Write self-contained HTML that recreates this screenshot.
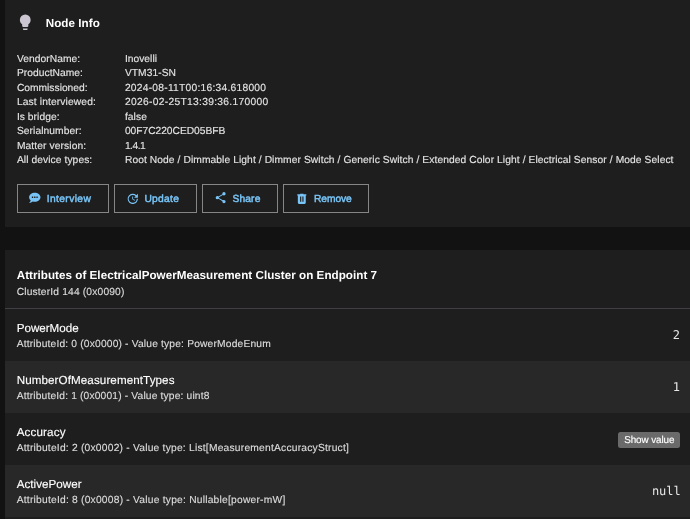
<!DOCTYPE html>
<html lang="en"><head><meta charset="utf-8"><title>Node Info</title>
<style>
html,body{margin:0;padding:0;background:#121212;}
body{width:690px;height:519px;overflow:hidden;position:relative;text-rendering:geometricPrecision;font-family:"Liberation Sans",sans-serif;}
h2,h3,p,dl,dt,dd,ul,li,button,code{margin:0;padding:0;border:0;background:none;font:inherit;color:inherit;list-style:none;text-align:left;text-rendering:inherit;}
.card{position:absolute;left:5px;width:685px;background:#1e1e1e;}
.s,.m{position:absolute;white-space:pre;}
.layer{position:absolute;left:0;top:0;width:100%;height:100%;will-change:transform;}
.s{font-family:"Liberation Sans",sans-serif;}
.m{font-family:"DejaVu Sans Mono","Liberation Mono",monospace;}
.btn{position:absolute;box-sizing:content-box;height:26.5px;border:1px solid #868686;cursor:pointer;}
.sv{position:absolute;background:#6a6a6a;border-radius:2.5px;cursor:pointer;}
.row{position:absolute;left:0;width:685px;height:52px;}
.row.alt{background:#282828;}
.ic{position:absolute;fill:#78c4f6;}
.divider{position:absolute;left:0;width:685px;top:58px;height:1px;background:#413e46;}
</style></head><body>
<section class="card" style="top:0;height:227px"><div class="layer">
 <svg style="position:absolute;left:10.9px;top:13.2px;width:18.5px;height:18.5px" viewBox="0 0 24 24" aria-hidden="true"><path fill="#cbc5d1" d="M12 2a7 7 0 0 0-7 7c0 2.380 1.190 4.470 3 5.740V17a1 1 0 0 0 1 1h6a1 1 0 0 0 1-1v-2.260c1.810-1.270 3-3.360 3-5.740a7 7 0 0 0-7-7M9 21a1 1 0 0 0 1 1h4a1 1 0 0 0 1-1v-1H9v1z"/></svg>
 <h2 class="s" style="left:40.70px;top:17px;line-height:13px;height:13px;font-size:11.65px;color:#ffffff;font-weight:bold;letter-spacing:0.059px;">Node Info</h2>
 <dl>
  <dt class="s" style="left:11.90px;top:54px;line-height:11px;height:11px;font-size:10.25px;color:#e3e3e3;-webkit-text-stroke:0.14px #e3e3e3;letter-spacing:0.065px;">VendorName:</dt><dd class="s" style="left:119.90px;top:54px;line-height:11px;height:11px;font-size:10.25px;color:#e3e3e3;-webkit-text-stroke:0.14px #e3e3e3;letter-spacing:0.024px;">Inovelli</dd>
  <dt class="s" style="left:11.90px;top:68px;line-height:11px;height:11px;font-size:10.25px;color:#e3e3e3;-webkit-text-stroke:0.14px #e3e3e3;letter-spacing:0.049px;">ProductName:</dt><dd class="s" style="left:119.90px;top:68px;line-height:11px;height:11px;font-size:10.25px;color:#e3e3e3;-webkit-text-stroke:0.14px #e3e3e3;letter-spacing:0.05px;">VTM31-SN</dd>
  <dt class="s" style="left:11.90px;top:83px;line-height:11px;height:11px;font-size:10.25px;color:#e3e3e3;-webkit-text-stroke:0.14px #e3e3e3;letter-spacing:0.005px;">Commissioned:</dt><dd class="s" style="left:119.90px;top:83px;line-height:11px;height:11px;font-size:10.25px;color:#e3e3e3;-webkit-text-stroke:0.14px #e3e3e3;letter-spacing:0.25px;">2024-08-11T00:16:34.618000</dd>
  <dt class="s" style="left:11.90px;top:97px;line-height:11px;height:11px;font-size:10.25px;color:#e3e3e3;-webkit-text-stroke:0.14px #e3e3e3;letter-spacing:0.128px;">Last interviewed:</dt><dd class="s" style="left:119.90px;top:97px;line-height:11px;height:11px;font-size:10.25px;color:#e3e3e3;-webkit-text-stroke:0.14px #e3e3e3;letter-spacing:0.309px;">2026-02-25T13:39:36.170000</dd>
  <dt class="s" style="left:11.90px;top:112px;line-height:11px;height:11px;font-size:10.25px;color:#e3e3e3;-webkit-text-stroke:0.14px #e3e3e3;letter-spacing:0.053px;">Is bridge:</dt><dd class="s" style="left:119.90px;top:112px;line-height:11px;height:11px;font-size:10.25px;color:#e3e3e3;-webkit-text-stroke:0.14px #e3e3e3;letter-spacing:0.089px;">false</dd>
  <dt class="s" style="left:11.90px;top:126px;line-height:11px;height:11px;font-size:10.25px;color:#e3e3e3;-webkit-text-stroke:0.14px #e3e3e3;letter-spacing:0.068px;">Serialnumber:</dt><dd class="s" style="left:119.90px;top:126px;line-height:11px;height:11px;font-size:10.25px;color:#e3e3e3;-webkit-text-stroke:0.14px #e3e3e3;letter-spacing:-0.028px;">00F7C220CED05BFB</dd>
  <dt class="s" style="left:11.90px;top:141px;line-height:11px;height:11px;font-size:10.25px;color:#e3e3e3;-webkit-text-stroke:0.14px #e3e3e3;letter-spacing:0.107px;">Matter version:</dt><dd class="s" style="left:119.90px;top:141px;line-height:11px;height:11px;font-size:10.25px;color:#e3e3e3;-webkit-text-stroke:0.14px #e3e3e3;letter-spacing:-0.483px;">1.4.1</dd>
  <dt class="s" style="left:11.90px;top:155px;line-height:11px;height:11px;font-size:10.25px;color:#e3e3e3;-webkit-text-stroke:0.14px #e3e3e3;letter-spacing:0.079px;">All device types:</dt><dd class="s" style="left:119.90px;top:155px;line-height:11px;height:11px;font-size:10.25px;color:#e3e3e3;-webkit-text-stroke:0.14px #e3e3e3;letter-spacing:0.084px;">Root Node / Dimmable Light / Dimmer Switch / Generic Switch / Extended Color Light / Electrical Sensor / Mode Select</dd>
 </dl>
 <div class="actions">
  <button type="button" class="btn" style="left:11.5px;top:184px;width:90px"><svg class="ic" style="left:10.30px;top:6.20px;width:13.6px;height:13.6px" viewBox="0 0 24 24" aria-hidden="true"><path d="M12 3c5.500 0 10 3.580 10 8s-4.500 8-10 8c-1.240 0-2.430-.180-3.530-.500C5.550 21 2 21 2 21c2.330-2.330 2.700-3.900 2.750-4.500C3.050 15.070 2 13.130 2 11c0-4.420 4.500-8 10-8m5.200 9.200v-2.400h-2.400v2.400h2.400m-4 0v-2.400h-2.400v2.400h2.400m-4 0v-2.400H6.800v2.400h2.400z"/></svg><span class="s" style="left:29.20px;top:9px;line-height:11px;height:11px;font-size:10.25px;color:#78c4f6;-webkit-text-stroke:0.45px #78c4f6;letter-spacing:0.387px;">Interview</span></button>
  <button type="button" class="btn" style="left:109px;top:184px;width:80.7px"><svg class="ic" style="left:10.70px;top:6.70px;width:13.6px;height:13.6px" viewBox="0 0 24 24" aria-hidden="true"><path d="M21 10.120h-6.780l2.740-2.820c-2.730-2.700-7.150-2.800-9.880-.1a6.887 6.887 0 0 0 0 9.800c2.730 2.700 7.150 2.700 9.880 0 1.360-1.350 2.040-2.920 2.040-4.900h2c0 1.980-.88 4.550-2.640 6.290-3.510 3.480-9.210 3.480-12.720 0-3.500-3.470-3.530-9.110-.02-12.580a8.987 8.987 0 0 1 12.650 0L21 3v7.120M12.500 8v4.250l3.500 2.080-.72 1.210L11 13V8h1.500z"/></svg><span class="s" style="left:29.40px;top:9px;line-height:11px;height:11px;font-size:10.25px;color:#78c4f6;-webkit-text-stroke:0.45px #78c4f6;letter-spacing:0.29px;">Update</span></button>
  <button type="button" class="btn" style="left:197px;top:184px;width:74px"><svg class="ic" style="left:10.60px;top:6.40px;width:13.3px;height:13.3px" viewBox="0 0 24 24" aria-hidden="true"><path d="M18 16.080c-.76 0-1.440.3-1.960.77L8.910 12.700c.05-.23.090-.46.090-.7s-.04-.47-.09-.7l7.050-4.110c.54.5 1.250.81 2.040.81a3 3 0 0 0 3-3 3 3 0 0 0-3-3 3 3 0 0 0-3 3c0 .24.040.47.090.7L8.040 9.810C7.500 9.310 6.790 9 6 9a3 3 0 0 0-3 3 3 3 0 0 0 3 3c.79 0 1.500-.31 2.040-.81l7.120 4.150c-.05.210-.08.430-.08.660 0 1.610 1.310 2.910 2.920 2.910s2.920-1.300 2.920-2.910A2.920 2.920 0 0 0 18 16.080z"/></svg><span class="s" style="left:29.50px;top:9px;line-height:11px;height:11px;font-size:10.25px;color:#78c4f6;-webkit-text-stroke:0.45px #78c4f6;letter-spacing:0.128px;">Share</span></button>
  <button type="button" class="btn" style="left:278.2px;top:184px;width:83.8px"><svg class="ic" style="left:10.55px;top:6.70px;width:13.6px;height:13.6px" viewBox="0 0 24 24" aria-hidden="true"><path d="M9 3v1H4v2h1v13a2 2 0 0 0 2 2h10a2 2 0 0 0 2-2V6h1V4h-5V3H9m0 5h2v9H9V8m4 0h2v9h-2V8z"/></svg><span class="s" style="left:29.70px;top:9px;line-height:11px;height:11px;font-size:10.25px;color:#78c4f6;-webkit-text-stroke:0.45px #78c4f6;letter-spacing:-0.045px;">Remove</span></button>
 </div>
</div></section>
<section class="card" style="top:250px;height:269px"><div class="layer">
 <h3 class="s" style="left:11.70px;top:19px;line-height:13px;height:13px;font-size:11.65px;color:#ffffff;font-weight:bold;letter-spacing:0.033px;">Attributes of ElectricalPowerMeasurement Cluster on Endpoint 7</h3>
 <p class="s" style="left:11.70px;top:37px;line-height:11px;height:11px;font-size:10.25px;color:#dcdcdc;-webkit-text-stroke:0.14px #dcdcdc;letter-spacing:0.164px;">ClusterId 144 (0x0090)</p>
 <div class="divider"></div>
 <ul>
  <li class="row" style="top:59px"><span class="s hl" style="left:11.70px;top:13px;line-height:13px;height:13px;font-size:11.65px;color:#ffffff;-webkit-text-stroke:0.14px #ffffff;letter-spacing:-0.025px;">PowerMode</span><span class="s sup" style="left:11.70px;top:30px;line-height:11px;height:11px;font-size:10.25px;color:#dcdcdc;-webkit-text-stroke:0.14px #dcdcdc;letter-spacing:0.173px;">AttributeId: 0 (0x0000) - Value type: PowerModeEnum</span><code class="m" style="left:667.70px;top:19px;line-height:14px;height:14px;font-size:12px;color:#e6e6e6;">2</code></li>
  <li class="row alt" style="top:111px"><span class="s hl" style="left:11.70px;top:13px;line-height:13px;height:13px;font-size:11.65px;color:#ffffff;-webkit-text-stroke:0.14px #ffffff;letter-spacing:0.082px;">NumberOfMeasurementTypes</span><span class="s sup" style="left:11.70px;top:30px;line-height:11px;height:11px;font-size:10.25px;color:#dcdcdc;-webkit-text-stroke:0.14px #dcdcdc;letter-spacing:0.157px;">AttributeId: 1 (0x0001) - Value type: uint8</span><code class="m" style="left:667.70px;top:19px;line-height:14px;height:14px;font-size:12px;color:#e6e6e6;">1</code></li>
  <li class="row" style="top:163px"><span class="s hl" style="left:11.70px;top:13px;line-height:13px;height:13px;font-size:11.65px;color:#ffffff;-webkit-text-stroke:0.14px #ffffff;letter-spacing:0.128px;">Accuracy</span><span class="s sup" style="left:11.70px;top:30px;line-height:11px;height:11px;font-size:10.25px;color:#dcdcdc;-webkit-text-stroke:0.14px #dcdcdc;letter-spacing:0.221px;">AttributeId: 2 (0x0002) - Value type: List[MeasurementAccuracyStruct]</span><button type="button" class="sv" style="left:613.3px;top:19px;width:61.6px;height:16px"><span class="s" style="left:5.90px;top:3px;line-height:11px;height:11px;font-size:9.9px;color:#ffffff;-webkit-text-stroke:0.14px #ffffff;letter-spacing:-0.096px;">Show value</span></button></li>
  <li class="row alt" style="top:215px"><span class="s hl" style="left:11.70px;top:13px;line-height:13px;height:13px;font-size:11.65px;color:#ffffff;-webkit-text-stroke:0.14px #ffffff;letter-spacing:0.018px;">ActivePower</span><span class="s sup" style="left:11.70px;top:30px;line-height:11px;height:11px;font-size:10.25px;color:#dcdcdc;-webkit-text-stroke:0.14px #dcdcdc;letter-spacing:0.225px;">AttributeId: 8 (0x0008) - Value type: Nullable[power-mW]</span><code class="m" style="left:646.90px;top:19px;line-height:14px;height:14px;font-size:12px;color:#e6e6e6;">null</code></li>
 </ul>
</div></section>
</body></html>
